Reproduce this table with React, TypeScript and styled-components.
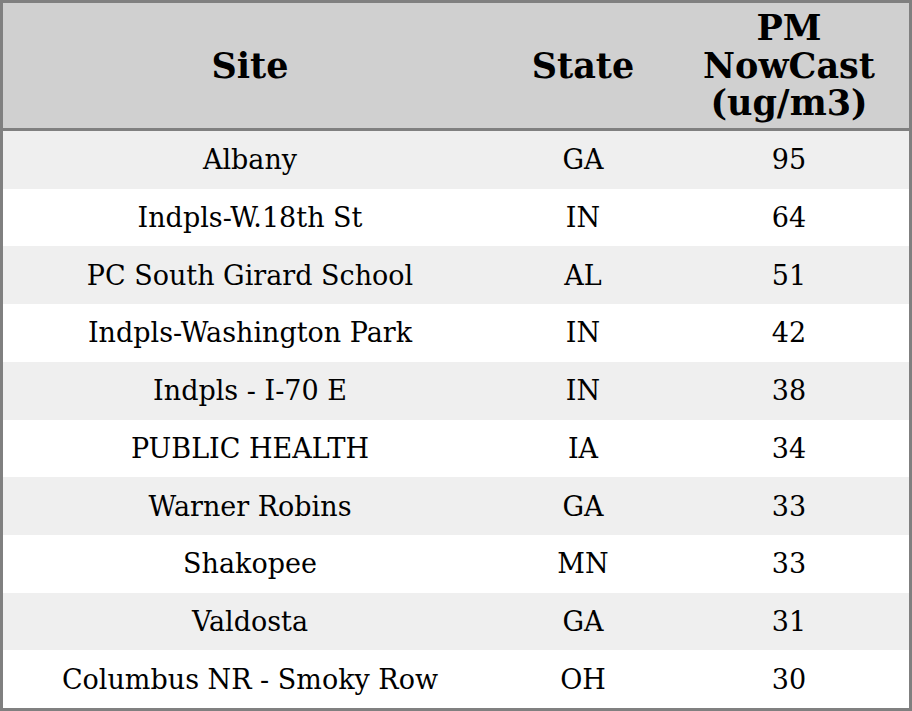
import React from 'react';
import styled, { createGlobalStyle } from 'styled-components';

const rows = [
  { site: 'Albany', state: 'GA', pm: 95 },
  { site: 'Indpls-W.18th St', state: 'IN', pm: 64 },
  { site: 'PC South Girard School', state: 'AL', pm: 51 },
  { site: 'Indpls-Washington Park', state: 'IN', pm: 42 },
  { site: 'Indpls - I-70 E', state: 'IN', pm: 38 },
  { site: 'PUBLIC HEALTH', state: 'IA', pm: 34 },
  { site: 'Warner Robins', state: 'GA', pm: 33 },
  { site: 'Shakopee', state: 'MN', pm: 33 },
  { site: 'Valdosta', state: 'GA', pm: 31 },
  { site: 'Columbus NR - Smoky Row', state: 'OH', pm: 30 },
];

const GlobalStyle = createGlobalStyle`
  html, body {
    margin: 0;
    padding: 0;
    background: #ffffff;
  }
  body {
    font-family: "DejaVu Serif", serif;
    color: #000;
  }
`;

export default function App() {
  return (
    <>
      <GlobalStyle />
      <Table>
        <HeaderRow>
          <HeadCell>Site</HeadCell>
          <HeadCell>State</HeadCell>
          <HeadCell>
            PM
            <br />
            NowCast
            <br />
            (ug/m3)
          </HeadCell>
        </HeaderRow>
        {rows.map((r, i) => (
          <Row key={r.site} striped={i % 2 === 0}>
            <Cell>{r.site}</Cell>
            <Cell>{r.state}</Cell>
            <Cell>{r.pm}</Cell>
          </Row>
        ))}
      </Table>
    </>
  );
}

const Table = styled.div`
  width: 912px;
  height: 711px;
  box-sizing: border-box;
  border: 3px solid #808080;
  display: flex;
  flex-direction: column;
`;

const HeaderRow = styled.div`
  display: grid;
  grid-template-columns: 494px 172px 240px;
  height: 125px;
  flex: none;
  background: #d0d0d0;
  border-bottom: 3px solid #808080;
`;

const HeadCell = styled.div`
  display: flex;
  align-items: center;
  justify-content: center;
  text-align: center;
  font-weight: bold;
  font-size: 35px;
  line-height: 37.5px;
`;

const Row = styled.div<{ striped: boolean }>`
  display: grid;
  grid-template-columns: 494px 172px 240px;
  flex: 1;
  background: ${p => (p.striped ? '#efefef' : '#ffffff')};
`;

const Cell = styled.div`
  display: flex;
  align-items: center;
  justify-content: center;
  font-size: 27px;
`;
